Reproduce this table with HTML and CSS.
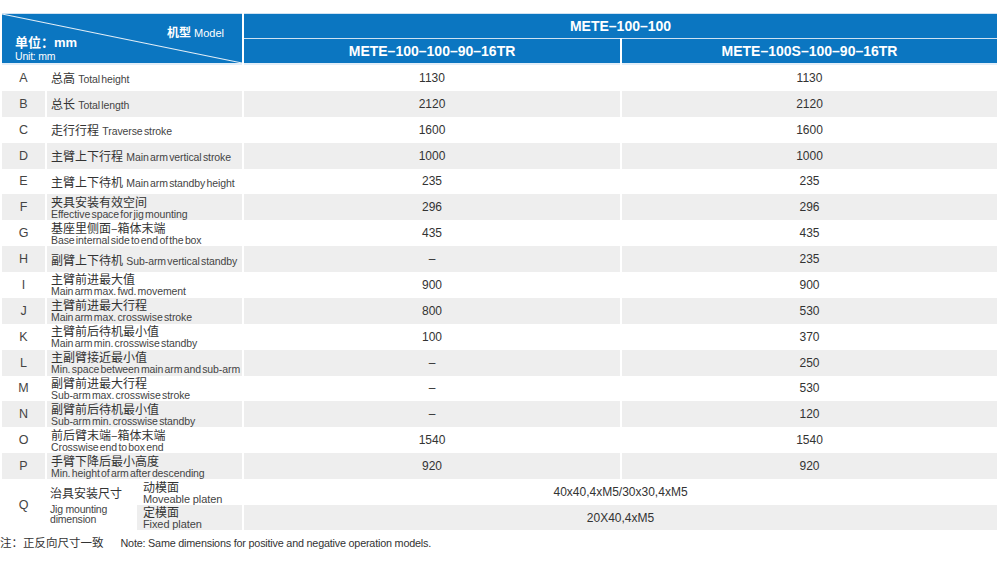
FILE: index.html
```html
<!DOCTYPE html>
<html lang="zh-CN">
<head>
<meta charset="utf-8">
<title>METE-100-100</title>
<link rel="stylesheet" href="styles.css">
</head>
<body>
<table class="spec">
  <colgroup>
    <col class="c-letter"><col class="c-la"><col class="c-lb"><col class="c-v1"><col class="c-v2">
  </colgroup>
  <thead>
    <tr class="h1">
      <th class="corner" colspan="3" rowspan="2">
        <div class="corner-in">
          <div class="model"><b>机型</b> Model</div>
          <div class="unit-cn">单位：mm</div>
          <div class="unit-en">Unit: mm</div>
        </div>
      </th>
      <th colspan="2">METE–100–100</th>
    </tr>
    <tr class="h2">
      <th>METE–100–100–90–16TR</th>
      <th>METE–100S–100–90–16TR</th>
    </tr>
  </thead>
  <tbody>
    <tr><td class="lt">A</td><td class="lb" colspan="2"><span class="cn">总高</span> <span class="en">Total height</span></td><td>1130</td><td>1130</td></tr>
    <tr class="g"><td class="lt">B</td><td class="lb" colspan="2"><span class="cn">总长</span> <span class="en">Total length</span></td><td>2120</td><td>2120</td></tr>
    <tr><td class="lt">C</td><td class="lb" colspan="2"><span class="cn">走行行程</span> <span class="en">Traverse stroke</span></td><td>1600</td><td>1600</td></tr>
    <tr class="g"><td class="lt">D</td><td class="lb" colspan="2"><span class="cn">主臂上下行程</span> <span class="en">Main arm vertical stroke</span></td><td>1000</td><td>1000</td></tr>
    <tr><td class="lt">E</td><td class="lb" colspan="2"><span class="cn">主臂上下待机</span> <span class="en">Main arm standby height</span></td><td>235</td><td>235</td></tr>
    <tr class="g"><td class="lt">F</td><td class="lb two" colspan="2"><div class="cn">夹具安装有效空间</div><div class="en">Effective space for jig mounting</div></td><td>296</td><td>296</td></tr>
    <tr><td class="lt">G</td><td class="lb two" colspan="2"><div class="cn">基座里侧面–箱体末端</div><div class="en">Base internal side to end of the box</div></td><td>435</td><td>435</td></tr>
    <tr class="g"><td class="lt">H</td><td class="lb" colspan="2"><span class="cn">副臂上下待机</span> <span class="en">Sub-arm vertical standby</span></td><td>–</td><td>235</td></tr>
    <tr><td class="lt">I</td><td class="lb two" colspan="2"><div class="cn">主臂前进最大值</div><div class="en">Main arm max. fwd. movement</div></td><td>900</td><td>900</td></tr>
    <tr class="g"><td class="lt">J</td><td class="lb two" colspan="2"><div class="cn">主臂前进最大行程</div><div class="en">Main arm max. crosswise stroke</div></td><td>800</td><td>530</td></tr>
    <tr><td class="lt">K</td><td class="lb two" colspan="2"><div class="cn">主臂前后待机最小值</div><div class="en">Main arm min. crosswise standby</div></td><td>100</td><td>370</td></tr>
    <tr class="g"><td class="lt">L</td><td class="lb two" colspan="2"><div class="cn">主副臂接近最小值</div><div class="en">Min. space between main arm and sub-arm</div></td><td>–</td><td>250</td></tr>
    <tr><td class="lt">M</td><td class="lb two" colspan="2"><div class="cn">副臂前进最大行程</div><div class="en">Sub-arm max. crosswise stroke</div></td><td>–</td><td>530</td></tr>
    <tr class="g"><td class="lt">N</td><td class="lb two" colspan="2"><div class="cn">副臂前后待机最小值</div><div class="en">Sub-arm min. crosswise standby</div></td><td>–</td><td>120</td></tr>
    <tr><td class="lt">O</td><td class="lb two" colspan="2"><div class="cn">前后臂末端–箱体末端</div><div class="en">Crosswise end to box end</div></td><td>1540</td><td>1540</td></tr>
    <tr class="g"><td class="lt">P</td><td class="lb two" colspan="2"><div class="cn">手臂下降后最小高度</div><div class="en">Min. height of arm after descending</div></td><td>920</td><td>920</td></tr>
    <tr class="q1">
      <td class="lt" rowspan="2">Q</td>
      <td class="lb qa" rowspan="2"><div class="cn">治具安装尺寸</div><div class="en qen">Jig mounting<br>dimension</div></td>
      <td class="lb qb two"><div class="cn">动模面</div><div class="en">Moveable platen</div></td>
      <td colspan="2">40x40,4xM5/30x30,4xM5</td>
    </tr>
    <tr class="g q2">
      <td class="lb qb two"><div class="cn">定模面</div><div class="en">Fixed platen</div></td>
      <td colspan="2">20X40,4xM5</td>
    </tr>
  </tbody>
</table>
<p class="note"><span class="note-cn">注：正反向尺寸一致</span><span class="note-en">Note: Same dimensions for positive and negative operation models.</span></p>
</body>
</html>
```

FILE: styles.css
```css
html, body {
  margin: 0;
  padding: 0;
  background: #fff;
}
body {
  font-family: "Liberation Sans", Arial, "Noto Sans CJK SC", sans-serif;
  color: #333;
}
.spec {
  margin-top: 13px;
  width: 999px;
  table-layout: fixed;
  border-collapse: separate;
  border-spacing: 2px 0;
}
.c-letter { width: 43px; }
.c-la { width: 88px; }
.c-lb { width: 105px; }
.c-v1 { width: 376px; }
.c-v2 { width: 375px; }

.spec th {
  background: #0b76c1;
  color: #fff;
  font-weight: bold;
  font-size: 14px;
  padding: 0;
  text-align: center;
  height: 24px;
  border-top: 1px solid #cfe2f2;
}
.spec .h2 th {
  border-bottom: 2px solid #e3eef8;
}
.spec th.corner {
  border-bottom: 2px solid #e3eef8;
  background: linear-gradient(to top right, #0b76c1 calc(50% - 1px), #e6f0f8 50%, #0b76c1 calc(50% + 1px));
  text-align: left;
  vertical-align: top;
}
.corner-in {
  height: 49px;
  padding-top: 11px;
  box-sizing: border-box;
}
.model {
  text-align: right;
  padding-right: 18px;
  font-size: 11px;
  font-weight: normal;
  line-height: 14px;
}
.model b {
  font-family: "Noto Sans CJK SC", sans-serif;
  font-size: 12px;
  font-weight: bold;
}
.unit-cn {
  margin-top: -4px;
  padding-left: 13px;
  font-family: "Liberation Sans", "Noto Sans CJK SC", sans-serif;
  font-size: 13px;
  font-weight: bold;
  line-height: 14px;
}
.unit-en {
  padding-left: 13px;
  font-size: 10.5px;
  font-weight: normal;
  line-height: 12px;
  letter-spacing: -0.2px;
}

.spec td {
  height: 25.875px;
  padding: 0;
  text-align: center;
  font-size: 12px;
  color: #333;
  background: #fff;
  vertical-align: middle;
}
.spec tr.g td {
  background: #eeeeee;
}
.spec td.lt {
  font-size: 12.5px;
  color: #444;
}
.spec td.lb {
  text-align: left;
  padding-left: 4px;
  white-space: nowrap;
}
.cn {
  font-family: "Noto Sans CJK SC", sans-serif;
  font-size: 12px;
  color: #333;
}
.en {
  font-size: 10.5px;
  letter-spacing: -0.1px;
  word-spacing: -1.5px;
  color: #444;
}
.two .cn {
  line-height: 14px;
}
.two .en {
  line-height: 11px;
}
.spec td.qa {
  background: #fff;
  padding-left: 3px;
}
.qa .cn {
  line-height: 16px;
  margin-bottom: 3px;
}
.qen {
  font-size: 10.5px;
  line-height: 10px;
  letter-spacing: -0.2px;
  word-spacing: 0;
}
.spec td.qb {
  padding-left: 6px;
}
.spec td.qb .cn {
  font-size: 12px;
  line-height: 14px;
}
.spec td.qb .en {
  font-size: 11px;
  line-height: 11px;
  word-spacing: 0;
}
.q1 td { height: 26px; }
.q2 td { height: 25px; }

.note {
  margin: 5px 0 0 0;
  font-size: 10.8px;
  line-height: 14px;
  color: #333;
}
.note-cn {
  font-family: "Noto Sans CJK SC", sans-serif;
  font-size: 11.5px;
  margin-right: 17px;
}
.note-en {
  letter-spacing: -0.2px;
}
```
